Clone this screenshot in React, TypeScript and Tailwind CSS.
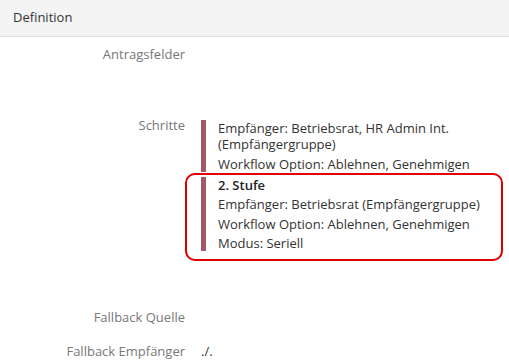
import React from 'react';

type Step = { title?: string; lines: string[]; highlighted?: boolean };

const steps: Step[] = [
  {
    lines: ['Empfänger: Betriebsrat, HR Admin Int. (Empfängergruppe)', 'Workflow Option: Ablehnen, Genehmigen'],
  },
  {
    title: '2. Stufe',
    lines: ['Empfänger: Betriebsrat (Empfängergruppe)', 'Workflow Option: Ablehnen, Genehmigen', 'Modus: Seriell'],
    highlighted: true,
  },
];

const Label: React.FC<{ children: React.ReactNode }> = ({ children }) => (
  <div className="w-[185px] shrink-0 text-right text-[#777] leading-4">{children}</div>
);

export default function App() {
  return (
    <div className="w-[509px] h-[362px] overflow-hidden bg-white text-[13px] text-[#333] font-['Open_Sans',sans-serif]">
      {/* Header */}
      <div className="h-[37px] bg-[#f4f4f4] border-b border-[#e0e0e0] flex items-center px-[13px]">
        <span className="text-[#333]">Definition</span>
      </div>

      <div className="pt-[9px]">
        <div className="flex">
          <Label>Antragsfelder</Label>
        </div>

        <div className="flex mt-[55px]">
          <Label>Schritte</Label>
          <div className="ml-4 pt-[3px] flex flex-col gap-[5px] w-[290px]">
            {steps.map((s, i) => (
              <div key={i} className="relative">
                {s.highlighted && (
                  <div className="absolute -left-[16px] -top-[4px] -bottom-[10px] w-[318px] border-2 border-[#e00000] rounded-[10px]" />
                )}
                <div className="border-l-[5px] border-[#a05a65] pl-[12px] leading-4">
                  {s.title && <div className="font-semibold text-[#222]">{s.title}</div>}
                  {s.lines.map((l, j) => (
                    <div key={j} className={j > 0 || s.title ? 'mt-[3.5px]' : ''}>
                      {l}
                    </div>
                  ))}
                </div>
              </div>
            ))}
          </div>
        </div>

        <div className="flex mt-[58px]">
          <Label>Fallback Quelle</Label>
        </div>

        <div className="flex mt-[18px]">
          <Label>Fallback Empfänger</Label>
          <div className="ml-4 leading-4">./.</div>
        </div>
      </div>
    </div>
  );
}
